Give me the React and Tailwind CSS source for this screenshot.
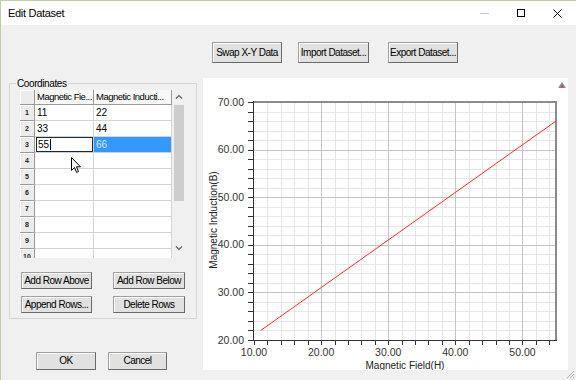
import React from 'react'

const X = (v) => 51 + ((v - 10) * 302) / 45
const Y = (v) => 262 - ((v - 20) * 238) / 50
const px = (n) => Math.round(n) + 0.5

const xs = []
for (let v = 10; v <= 54; v += 2) xs.push(v)
const ys = []
for (let v = 20; v <= 70; v += 2) ys.push(v)

const rows = [
  ['11', '22'],
  ['33', '44'],
  ['55', '66'],
  ['', ''],
  ['', ''],
  ['', ''],
  ['', ''],
  ['', ''],
  ['', ''],
  ['', ''],
]

function Btn({ className, children }) {
  return (
    <button
      className={
        'flex items-center justify-center bg-[#e1e1e1] border border-[#a0a0a0] border-r-[#696969] border-b-[#696969] shadow-[inset_1px_1px_0_#ffffff] text-[10px] tracking-[-0.5px] text-black leading-none ' +
        className
      }
    >
      {children}
    </button>
  )
}

function Chart() {
  return (
    <svg width="365" height="292" viewBox="0 0 365 292">
      {/* minor grid */}
      {xs.filter((v) => v % 10 !== 0).map((v) => (
        <line key={'mx' + v} x1={px(X(v))} x2={px(X(v))} y1={24} y2={262} stroke="#e6e6e6" />
      ))}
      {ys.filter((v) => v % 10 !== 0).map((v) => (
        <line key={'my' + v} x1={51} x2={353} y1={px(Y(v))} y2={px(Y(v))} stroke="#e6e6e6" />
      ))}
      {/* major grid */}
      {xs.filter((v) => v % 10 === 0 && v > 10).map((v) => (
        <line key={'Mx' + v} x1={px(X(v))} x2={px(X(v))} y1={24} y2={262} stroke="#c4c4c4" />
      ))}
      {ys.filter((v) => v % 10 === 0 && v > 20 && v < 70).map((v) => (
        <line key={'My' + v} x1={51} x2={353} y1={px(Y(v))} y2={px(Y(v))} stroke="#c4c4c4" />
      ))}

      {/* frame */}
      <line x1={51} x2={354} y1={24} y2={24} stroke="#8a8a8a" strokeWidth="2" />
      <line x1={353} x2={353} y1={24} y2={262} stroke="#8a8a8a" strokeWidth="2" />
      <line x1={50.5} x2={50.5} y1={23} y2={263} stroke="#333" />
      <line x1={50} x2={354} y1={262.5} y2={262.5} stroke="#333" />

      {/* ticks */}
      {ys.map((v) => (
        <line key={'ty' + v} x1={45} x2={51} y1={px(Y(v))} y2={px(Y(v))} stroke="#333" />
      ))}
      {xs.map((v) => (
        <line key={'tx' + v} x1={px(X(v))} x2={px(X(v))} y1={262} y2={267} stroke="#333" />
      ))}

      {/* tick labels */}
      {[20, 30, 40, 50, 60, 70].map((v) => (
        <text
          key={'ly' + v}
          x={41}
          y={Y(v) + 3.5}
          textAnchor="end"
          fontSize="10.5"
          fontFamily="Liberation Sans, Arial, sans-serif"
          fill="#333"
        >
          {v.toFixed(2)}
        </text>
      ))}
      {[10, 20, 30, 40, 50].map((v) => (
        <text
          key={'lx' + v}
          x={X(v)}
          y={278}
          textAnchor="middle"
          fontSize="10.5"
          fontFamily="Liberation Sans, Arial, sans-serif"
          fill="#333"
        >
          {v.toFixed(2)}
        </text>
      ))}

      {/* axis titles */}
      <text
        x={202}
        y={291}
        textAnchor="middle"
        fontSize="10"
        fontFamily="Liberation Sans, Arial, sans-serif"
        fill="#222"
      >
        Magnetic Field(H)
      </text>
      <text
        transform="translate(14 142) rotate(-90)"
        textAnchor="middle"
        fontSize="10"
        fontFamily="Liberation Sans, Arial, sans-serif"
        fill="#222"
      >
        Magnetic Induction(B)
      </text>

      {/* data */}
      <line x1={X(11)} y1={Y(22)} x2={X(55)} y2={Y(66)} stroke="#ff2a2a" strokeWidth="1" />

      {/* corner marker */}
      <polygon points="355,10 359,4 363,10" fill="#8c8c8c" />
      <polygon points="357.5,9.5 359,7 360.5,9.5" fill="#d03030" />
    </svg>
  )
}

function Grid() {
  return (
    <div className="relative flex w-[166px] h-[168px] overflow-hidden">
      <div className="w-[152px] flex flex-col">
        {/* header */}
        <div className="flex h-[15px] shrink-0">
          <div className="w-[15px] bg-[#ececec] border-r border-b border-[#9a9a9a] shadow-[inset_1px_1px_0_#ffffff]" />
          <div className="w-[59px] bg-[#f7f7f7] border-r border-b border-[#9a9a9a] text-[9.5px] tracking-[-0.5px] pl-[2px] leading-[14px] whitespace-nowrap overflow-hidden">
            Magnetic Fie...
          </div>
          <div className="w-[78px] bg-[#f7f7f7] border-r border-b border-[#9a9a9a] text-[9.5px] tracking-[-0.5px] pl-[2px] leading-[14px] whitespace-nowrap overflow-hidden">
            Magnetic Inducti...
          </div>
        </div>
        {rows.map((r, i) => (
          <div key={i} className="flex h-[16px] shrink-0">
            <div className="w-[15px] bg-[#ececec] border-r border-b border-[#9a9a9a] shadow-[inset_1px_1px_0_#ffffff] text-[7px] font-bold text-center leading-[15px] text-[#222]">
              {i + 1}
            </div>
            {i === 2 ? (
              <>
                <div className="w-[59px] bg-white border-b border-r border-[#d0d0d0] flex">
                  <div className="flex-1 ml-[1px] border border-[#1b2a3a] text-[10px] leading-[13px] pl-[1px] flex items-center">
                    55<span className="inline-block w-px h-[11px] bg-black ml-[1px]" />
                  </div>
                </div>
                <div className="w-[78px] bg-[#3399ff] border-b border-r border-[#d0d0d0] text-[10px] leading-[15px] pl-[2px] text-[#d6ebff]">
                  {r[1]}
                </div>
              </>
            ) : (
              <>
                <div className="w-[59px] bg-white border-b border-r border-[#d4d4d4] text-[10px] leading-[15px] pl-[2px]">
                  {r[0]}
                </div>
                <div className="w-[78px] bg-white border-b border-r border-[#d4d4d4] text-[10px] leading-[15px] pl-[2px]">
                  {r[1]}
                </div>
              </>
            )}
          </div>
        ))}
      </div>
      {/* scrollbar */}
      <div className="w-[14px] bg-[#f0f0f0] flex flex-col items-center">
        <svg width="14" height="14" viewBox="0 0 14 14">
          <path d="M4 8.5 L7 5.5 L10 8.5" fill="none" stroke="#606060" strokeWidth="1.2" />
        </svg>
        <div className="w-[10px] h-[96px] mt-[1px] bg-[#cdcdcd]" />
        <div className="flex-1" />
        <svg width="14" height="14" viewBox="0 0 14 14" className="mb-[3px]">
          <path d="M4 5.5 L7 8.5 L10 5.5" fill="none" stroke="#606060" strokeWidth="1.2" />
        </svg>
      </div>

      {/* mouse pointer */}
      <svg
        className="absolute left-[51px] top-[67px]"
        width="12"
        height="18"
        viewBox="0 0 12 18"
      >
        <path
          d="M0.5 0.5 L0.5 13.5 L3.5 10.5 L5.5 15.5 L7.5 14.5 L5.5 9.8 L9.5 9.8 Z"
          fill="#ffffff"
          stroke="#000000"
          strokeWidth="1"
          strokeLinejoin="round"
        />
      </svg>
    </div>
  )
}

export default function App() {
  return (
    <div className="w-[576px] h-[380px] flex flex-col border-l border-t border-[#bccfa2] bg-[#f0f0f0] overflow-hidden font-['Liberation_Sans',Arial,sans-serif] text-black">
      {/* title bar */}
      <div className="h-[24px] bg-white flex items-center shrink-0">
        <span className="ml-[7px] text-[11px] tracking-[-0.3px]">Edit Dataset</span>
        <div className="ml-auto flex items-center h-full">
          <div className="w-[9px] h-px bg-[#c8c8c8] mr-[28px]" />
          <div className="w-[8px] h-[8px] border border-black mr-[28px]" />
          <svg width="9" height="9" viewBox="0 0 9 9" className="mr-[14px]">
            <path d="M0.5 0.5 L8.5 8.5 M8.5 0.5 L0.5 8.5" stroke="#000" strokeWidth="1" />
          </svg>
        </div>
      </div>

      {/* body */}
      <div className="flex-1 flex flex-col relative">
        <div className="flex pt-[17px] pl-[211px]">
          <Btn className="w-[70px] h-[21px]">Swap X-Y Data</Btn>
          <Btn className="w-[71px] h-[21px] ml-[16px]">Import Dataset...</Btn>
          <Btn className="w-[70px] h-[21px] ml-[19px]">Export Dataset...</Btn>
        </div>

        <div className="flex mt-[15px]">
          {/* left column */}
          <div className="flex flex-col ml-[8px] w-[188px]">
            <fieldset className="border border-[#d5d5d5] pl-[10px] pr-[10px] pb-[5px]">
              <legend className="-ml-[4px] px-[1px] text-[10px] leading-[11px] tracking-[-0.4px]">
                Coordinates
              </legend>
              <div className="mt-[1px]">
                <Grid />
              </div>
              <div className="grid grid-cols-[71px_72px] gap-x-[21px] gap-y-[7px] mt-[14px] ml-[1px]">
                <Btn className="h-[17px]">Add Row Above</Btn>
                <Btn className="h-[17px]">Add Row Below</Btn>
                <Btn className="h-[17px]">Append Rows...</Btn>
                <Btn className="h-[17px]">Delete Rows</Btn>
              </div>
            </fieldset>

            <div className="flex mt-[33px] ml-[27px] gap-[12px]">
              <Btn className="w-[60px] h-[18px] border-[#3c3c3c]">OK</Btn>
              <Btn className="w-[59px] h-[18px]">Cancel</Btn>
            </div>
          </div>

          {/* chart panel */}
          <div className="ml-[6px] w-[365px] h-[292px] bg-white">
            <Chart />
          </div>
        </div>

        {/* size grip */}
        <svg className="absolute right-[1px] bottom-[1px]" width="10" height="10" viewBox="0 0 10 10">
          <path d="M9 2 L2 9 M9 5 L5 9 M9 8 L8 9" stroke="#b0b0b0" strokeWidth="1" />
        </svg>
      </div>
    </div>
  )
}
